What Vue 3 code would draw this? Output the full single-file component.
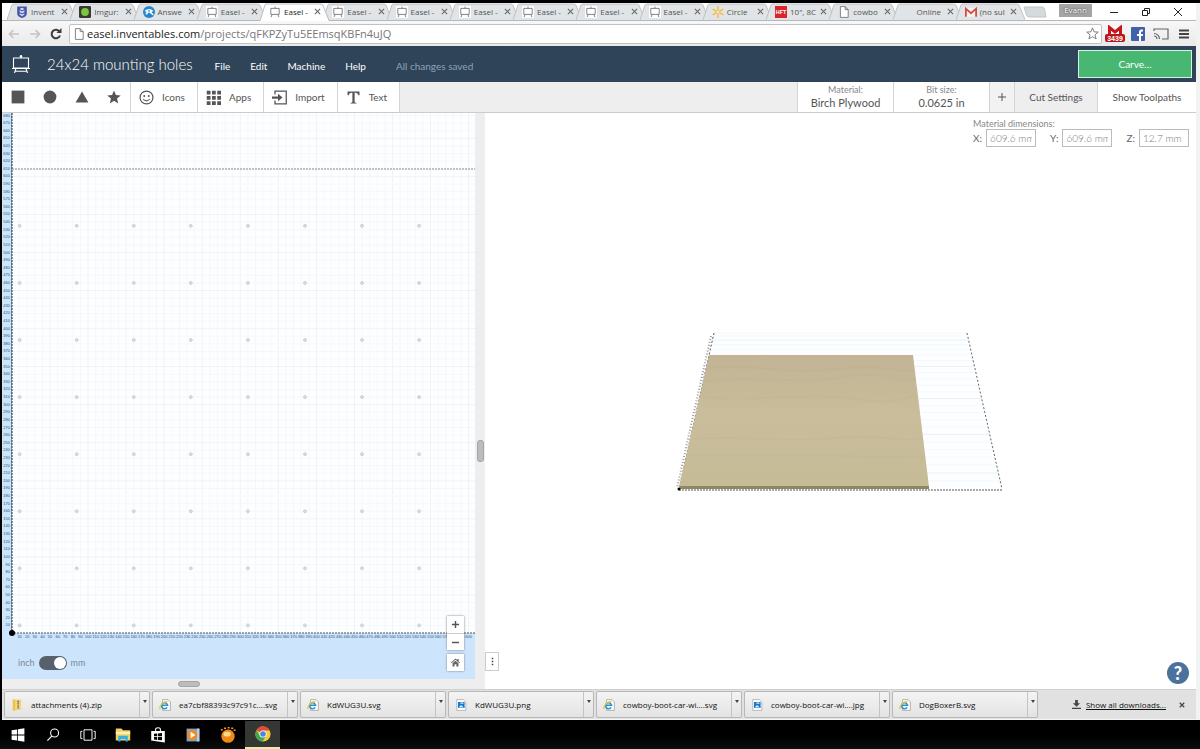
<script setup>
import { ref } from 'vue'

const easelTab = (active = false) => ({ icon: 'easel', title: 'Easel -', active })
const tabs = [
  { icon: 'shield', title: 'Invent' },
  { icon: 'imgur', title: 'Imgur:' },
  { icon: 'answers', title: 'Answe' },
  easelTab(),
  easelTab(true),
  easelTab(),
  easelTab(),
  easelTab(),
  easelTab(),
  easelTab(),
  easelTab(),
  { icon: 'spark', title: 'Circle' },
  { icon: 'hft', title: '10", 8C' },
  { icon: 'page', title: 'cowbo' },
  { icon: '', title: 'Online' },
  { icon: 'gmail', title: '(no sul' }
]

const downloads = [
  { icon: 'zip', name: 'attachments (4).zip' },
  { icon: 'ie', name: 'ea7cbf88393c97c91c....svg' },
  { icon: 'ie', name: 'KdWUG3U.svg' },
  { icon: 'photo', name: 'KdWUG3U.png' },
  { icon: 'ie', name: 'cowboy-boot-car-wi....svg' },
  { icon: 'photo', name: 'cowboy-boot-car-wi....jpg' },
  { icon: 'ie', name: 'DogBoxerB.svg' }
]

const menus = ['File', 'Edit', 'Machine', 'Help']
const shapes = [
  { id: 'square', label: 'Square' },
  { id: 'circle', label: 'Circle' },
  { id: 'triangle', label: 'Triangle' },
  { id: 'star', label: 'Star' }
]
const tools = [
  { id: 'smile', label: 'Icons' },
  { id: 'apps', label: 'Apps' },
  { id: 'import', label: 'Import' },
  { id: 'text', label: 'Text' }
]
const taskIcons = [
  { id: 'windows', label: 'Start' },
  { id: 'search', label: 'Search' },
  { id: 'taskview', label: 'Task view' },
  { id: 'folder', label: 'File Explorer' },
  { id: 'store', label: 'Store' },
  { id: 'media', label: 'Media player' },
  { id: 'orb', label: 'Image viewer' },
  { id: 'chrome', label: 'Chrome', active: true }
]

const dims = ref([
  { axis: 'X', value: '609.6 mm' },
  { axis: 'Y', value: '609.6 mm' },
  { axis: 'Z', value: '12.7 mm' }
])
const metric = ref(true)

// Drawing canvas geometry: 10 mm is STEP units, origin at (OX, OY)
const STEP = 7.61
const OX = 10
const OY = 520
const cols = Array.from({ length: 60 }, (_, i) => i + 1)
const rows = Array.from({ length: 68 }, (_, i) => i + 1)
const holes = []
for (let c = 0; c < 8; c++) {
  for (let r = 0; r < 8; r++) {
    holes.push({ x: OX + STEP * (1 + 7.5 * c), y: OY - STEP * (1 + 7.5 * r) })
  }
}

// Horizontal lines of the preview's ground grid, as depth from the far edge
const ground = Array.from({ length: 24 }, (_, i) => {
  const t = (i / 24) ** 1.25
  return { y: 220 + 156 * t, x1: 228 - 34 * t, x2: 482 + 35 * t, strong: i % 5 === 2 }
})
const grain = [
  'M222 255C270 250 300 262 350 256S410 260 428 257',
  'M220 268C260 262 310 272 360 264S400 270 430 266',
  'M216 284C270 290 320 278 372 286S420 280 432 284',
  'M208 326C250 322 300 330 350 325S410 330 436 326',
  'M204 342C260 344 310 340 360 343S420 342 439 344'
]
</script>

<template>
  <div class="desktop">
    <svg class="defs" aria-hidden="true">
      <symbol id="easel" viewBox="0 0 20 20">
        <path d="M10 1v3M2.500 4h15v10h-15zM1 14.500h18M5 14.500l-1.500 4.500M15 14.500l1.500 4.500M4 17.200h12" fill="none" stroke="currentColor" stroke-width="1.100" />
        <circle cx="10" cy="2.500" r="1.300" fill="currentColor" />
      </symbol>
      <symbol id="easelfav" viewBox="0 0 20 20">
        <rect width="20" height="20" fill="#fff" />
        <path d="M10 1v3M3 4h14v10H3zM5 14.500l-1.500 4M15 14.500l1.500 4" fill="none" stroke="#777" stroke-width="1.500" />
      </symbol>
      <symbol id="shield" viewBox="0 0 20 20">
        <path d="M2 1h16v11q0 6-8 8-8-2-8-8z" fill="#4656a8" />
        <path d="M10 3l4 2-4 2-4-2zM6 7l4 2v3l-4-2zM14 7l-4 2v3l4-2zM6 12l4 2 4-2v2l-4 3-4-3z" fill="#dfe4f8" />
      </symbol>
      <symbol id="imgur" viewBox="0 0 20 20">
        <rect width="20" height="20" rx="2" fill="#3a3834" /><circle cx="10" cy="10" r="6.500" fill="#7bc93a" />
      </symbol>
      <symbol id="answers" viewBox="0 0 20 20">
        <circle cx="10" cy="10" r="10" fill="#2585cf" />
        <path d="M2.500 8.500Q10 1.500 17.500 8.500L14 10l4 4-2 1.500-6-5-4 4-2-1.500L6 10z" fill="#fff" /><circle cx="10" cy="8" r="1.500" fill="#2585cf" />
      </symbol>
      <symbol id="spark" viewBox="0 0 20 20">
        <path d="M10 1v6M10 13v6M2 5.500l5 3M18 5.500l-5 3M2 14.500l5-3M18 14.500l-5-3" stroke="#f9bb35" stroke-width="2.500" stroke-linecap="round" />
      </symbol>
      <symbol id="hft" viewBox="0 0 20 20">
        <rect width="20" height="20" fill="#d9252b" />
        <text x="10" y="14" text-anchor="middle" font-family="Liberation Sans, sans-serif" font-weight="bold" font-size="9" fill="#fff">HFT</text>
      </symbol>
      <symbol id="page" viewBox="0 0 20 20">
        <path d="M4 1h8l5 5v13H4zM12 1v5h5" fill="#fff" stroke="#777" stroke-width="1.500" />
      </symbol>
      <symbol id="gmail" viewBox="0 0 20 20">
        <rect x="0" y="3" width="20" height="15" rx="1" fill="#f4f4f4" />
        <path d="M1.500 18V4.500L10 12l8.500-7.500V18" fill="none" stroke="#d54b3d" stroke-width="3" />
      </symbol>
      <symbol id="zip" viewBox="0 0 20 20">
        <path d="M3 1h14v17l-10 1H3z" fill="#f6d57a" /><path d="M3 1h4v18H3z" fill="#edc350" />
        <path d="M12 3v13" stroke="#77725f" stroke-width="3" stroke-dasharray="2 1" />
      </symbol>
      <symbol id="ie" viewBox="0 0 20 20">
        <path d="M6 1h9l4 4v14H6z" fill="#fafafa" stroke="#8a8a8a" />
        <path d="M13.500 14a5 5 0 1 1 .8-3.500H5" fill="none" stroke="#2a94d6" stroke-width="2.600" />
        <path d="M2 17C-1 13 7 4 14 4" fill="none" stroke="#e9c62e" stroke-width="1.800" />
      </symbol>
      <symbol id="photo" viewBox="0 0 20 20">
        <path d="M3 1h11l4 4v14H3z" fill="#fff" stroke="#8a9099" /><rect x="5" y="5" width="11" height="10" fill="#1877c9" />
        <path d="M6 14l4-4 5 4zM9 6h5v2H9z" fill="#d7ecfa" />
      </symbol>
      <symbol id="square" viewBox="0 0 20 20"><rect x="2" y="2" width="16" height="16" fill="currentColor" /></symbol>
      <symbol id="circle" viewBox="0 0 20 20"><circle cx="10" cy="10" r="8" fill="currentColor" /></symbol>
      <symbol id="triangle" viewBox="0 0 20 20"><path d="M10 3l8 14H2z" fill="currentColor" /></symbol>
      <symbol id="star" viewBox="0 0 20 20"><path d="M10 2l2.400 5.500 6 .5-4.600 4 1.400 6-5.200-3.200L4.800 18l1.400-6-4.600-4 6-.5z" fill="currentColor" /></symbol>
      <symbol id="smile" viewBox="0 0 20 20">
        <circle cx="10" cy="10" r="8.600" fill="none" stroke="currentColor" stroke-width="1.600" />
        <circle cx="7" cy="8" r="1.300" fill="currentColor" /><circle cx="13" cy="8" r="1.300" fill="currentColor" />
        <path d="M5.500 12q4.500 5 9 0" fill="none" stroke="currentColor" stroke-width="1.400" />
      </symbol>
      <symbol id="apps" viewBox="0 0 20 20">
        <path d="M1 1h5v5H1zM8 1h5v5H8zM15 1h5v5h-5zM1 8h5v5H1zM8 8h5v5H8zM15 8h5v5h-5zM1 15h5v5H1zM8 15h5v5H8zM15 15h5v5h-5z" fill="currentColor" />
      </symbol>
      <symbol id="import" viewBox="0 0 20 20">
        <path d="M4 6V1.500h15v17H4V14" fill="none" stroke="currentColor" stroke-width="1.700" />
        <path d="M0 8.500h8V5l6 5-6 5v-3.500H0z" fill="currentColor" />
      </symbol>
      <symbol id="text" viewBox="0 0 20 20">
        <path d="M2 2h16v5h-1.500Q16 3.500 13 3.500h-1.500V16q0 1 2.500 1.200V18H6v-.8Q8.500 17 8.500 16V3.500H7Q4 3.500 3.500 7H2z" fill="currentColor" />
      </symbol>
      <symbol id="windows" viewBox="0 0 20 20"><path d="M2 4l7-1v6.500H2zM10 2.800L18 1.500v8h-8zM2 10.500h7V17l-7-1zM10 10.500h8v8l-8-1.200z" fill="#fff" /></symbol>
      <symbol id="search" viewBox="0 0 20 20"><circle cx="12" cy="7.500" r="5" fill="none" stroke="#fff" stroke-width="1.300" /><path d="M8.500 11.500L3 17" stroke="#fff" stroke-width="1.500" /></symbol>
      <symbol id="taskview" viewBox="0 0 20 20"><path d="M5 3.500h10v13H5zM3 5.500H1v9h2M17 5.500h2v9h-2" fill="none" stroke="#fff" stroke-width="1.200" /></symbol>
      <symbol id="folder" viewBox="0 0 20 20"><path d="M1 2h7l2 2h9v13H1z" fill="#f4d067" /><path d="M1 6h18v3H1z" fill="#fff0ae" /><path d="M4 18v-7h12v7h-3v-3H7v3z" fill="#35aee0" /></symbol>
      <symbol id="store" viewBox="0 0 20 20"><path d="M7 5V3q0-2 3-2t3 2v2" fill="none" stroke="#fff" stroke-width="1.300" /><path d="M1.500 5h17v14.500L1.500 17z" fill="#fff" /><path d="M5 8.500l4-.3v3.500H5zM10 8l5-.4v4.100h-5zM5 12.600h4v3.500l-4-.4zM10 12.600h5v4l-5-.5z" fill="#050505" /></symbol>
      <symbol id="media" viewBox="0 0 20 20"><rect x="2" y="2" width="16" height="16" fill="#7aa7cf" /><rect x="15" y="2" width="3" height="16" fill="#b9d1e6" /><circle cx="9" cy="10" r="6.500" fill="#f28a24" /><path d="M7 6l6 4-6 4z" fill="#fff" /></symbol>
      <symbol id="orb" viewBox="0 0 20 20"><circle cx="10" cy="11.500" r="8.300" fill="#ee8a16" /><ellipse cx="9" cy="9" rx="4.500" ry="3" fill="#ffd98a" /><path d="M1 3.500h2.500M5 1.500h2.500M9.500 1h2.500M14 1.500h2.500M17 4h2.500" stroke="#e59a28" stroke-width="2" /></symbol>
      <symbol id="chrome" viewBox="0 0 20 20">
        <circle cx="10" cy="10" r="9.500" fill="#f7ca3b" />
        <path d="M10 10L1.800 5.200A9.500 9.500 0 0 1 18.400 5.500H10z" fill="#e14b3b" />
        <path d="M1.800 5.200A9.500 9.500 0 0 0 9.500 19.500L14 12 6 12z" fill="#3fa653" />
        <circle cx="10" cy="10" r="4.500" fill="#fff" /><circle cx="10" cy="10" r="3.500" fill="#4a86e0" />
      </symbol>
    </svg>

    <div class="window">
      <div class="tabstrip">
        <div class="tabs">
          <div v-for="(t, i) in tabs" :key="i" class="tab" :class="{ active: t.active }">
            <svg class="tab-shape" viewBox="0 0 70 17" preserveAspectRatio="none" aria-hidden="true">
              <path d="M0 17L5 2Q5.500 1 7 1H61Q63 1 63.500 2L70 17" />
            </svg>
            <svg class="fav" aria-hidden="true"><use v-if="t.icon" :href="t.icon === 'easel' ? '#easelfav' : '#' + t.icon" /></svg>
            <span class="tab-title">{{ t.title }}</span>
            <button class="tab-close" aria-label="Close tab">
              <svg viewBox="0 0 8 8"><path d="M1 1l6 6M7 1L1 7" /></svg>
            </button>
          </div>
        </div>
        <button class="newtab" aria-label="New tab"><svg viewBox="0 0 24 12"><path d="M1 1h18q2 0 2.500 2L23 11H6Q4 11 3.500 9z" fill="#d5dadd" stroke="#c0c5c8" /></svg></button>
        <span class="profile">Evann</span>
        <div class="winctl">
          <button aria-label="Minimize"><svg viewBox="0 0 8 8"><path d="M0 4.500h8" /></svg></button>
          <button aria-label="Restore"><svg viewBox="0 0 8 8"><path d="M.5 2.500h5v5h-5zM2.500 2V.5h5v5H6" /></svg></button>
          <button aria-label="Close"><svg viewBox="0 0 8 8"><path d="M0 0l8 8M8 0L0 8" /></svg></button>
        </div>
      </div>

      <div class="addressbar">
        <button class="nav" aria-label="Back"><svg viewBox="0 0 12 12"><path d="M11 6H1.500M5.500 2l-4 4 4 4" stroke="#c4c4c4" /></svg></button>
        <button class="nav" aria-label="Forward"><svg viewBox="0 0 12 12"><path d="M1 6h9.500M6.500 2l4 4-4 4" stroke="#c4c4c4" /></svg></button>
        <button class="nav" aria-label="Reload"><svg viewBox="0 0 12 12"><path d="M9.500 3.500A4.300 4.300 0 1 0 10 7.500" stroke="#3c3c3c" stroke-width="2" /><path d="M11.500 0v5h-5z" fill="#3c3c3c" /></svg></button>
        <div class="omnibox">
          <svg class="doc" aria-hidden="true"><use href="#page" /></svg>
          <span class="url"><b>easel.inventables.com</b>/projects/qFKPZyTu5EEmsqKBFn4uJQ</span>
          <button class="bookmark" aria-label="Bookmark"><svg viewBox="0 0 14 14"><path d="M7 1l1.700 4.200 4.500.3-3.500 2.900 1.200 4.400L7 10.400l-3.900 2.400 1.200-4.400L.8 5.500l4.500-.3z" fill="#fff" stroke="#777" /></svg></button>
        </div>
        <div class="exts">
          <button class="ext" aria-label="Gmail checker">
            <svg viewBox="0 0 20 18"><rect x="3" y="1" width="14" height="10" fill="#fff" /><path d="M4.500 11V2.500L10 7l5.500-4.500V11" fill="none" stroke="#c8161d" stroke-width="3" /><rect y="9" width="20" height="8" rx="2" fill="#b8141b" /><text x="10" y="16" text-anchor="middle" font-family="Liberation Sans, sans-serif" font-weight="bold" font-size="7" fill="#fff">3439</text></svg>
          </button>
          <button class="ext" aria-label="Facebook">
            <svg viewBox="0 0 20 18"><rect x="3" y="2" width="14" height="14" rx="1" fill="#3f62ab" /><path d="M11 16v-5H9V9h2V7q0-2.500 2.500-2.500H15v2h-1Q13 6.500 13 7.500V9h2l-.3 2H13v5z" fill="#fff" /></svg>
          </button>
          <button class="ext" aria-label="Cast">
            <svg viewBox="0 0 20 18"><path d="M3 6V4h14v10h-6M3 8.500A5.500 5.500 0 0 1 8.500 14M3 11a3 3 0 0 1 3 3" fill="none" stroke="#666" stroke-width="1.200" /></svg>
          </button>
          <button class="ext" aria-label="Menu">
            <svg viewBox="0 0 20 18"><path d="M5 5.500h10M5 9h10M5 12.500h10" stroke="#444" stroke-width="2" /></svg>
          </button>
        </div>
      </div>

      <header class="appbar">
        <svg class="brand" aria-hidden="true"><use href="#easel" /></svg>
        <h1>24x24 mounting holes</h1>
        <nav><button v-for="m in menus" :key="m">{{ m }}</button></nav>
        <span class="saved">All changes saved</span>
        <button class="carve">Carve…</button>
      </header>

      <div class="toolbar">
        <div class="shapes">
          <button v-for="s in shapes" :key="s.id" :aria-label="s.label"><svg><use :href="'#' + s.id" /></svg></button>
        </div>
        <button v-for="t in tools" :key="t.id" class="tool"><svg aria-hidden="true"><use :href="'#' + t.id" /></svg>{{ t.label }}</button>
        <div class="filler"></div>
        <button class="spec"><small>Material:</small>Birch Plywood</button>
        <button class="spec"><small>Bit size:</small>0.0625 in</button>
        <button class="plus" aria-label="Add bit"><svg viewBox="0 0 10 10"><path d="M5 1v8M1 5h8" /></svg></button>
        <button class="cut">Cut Settings</button>
        <button class="paths">Show Toolpaths</button>
      </div>

      <main class="workspace">
        <section class="design">
          <div class="canvas">
            <svg class="drawing" viewBox="0 0 473 566" preserveAspectRatio="xMinYMax slice">
              <rect width="473" height="566" fill="#cce5fd" />
              <rect :x="OX" y="0" width="463" :height="OY" fill="#fdfeff" />
              <g stroke-width="1">
                <line v-for="c in cols" :key="'c' + c" :x1="OX + c * STEP" :x2="OX + c * STEP" y1="0" :y2="OY" :stroke="c % 5 ? '#f5f8fa' : '#eff3f5'" />
                <line v-for="r in rows" :key="'r' + r" :x1="OX" x2="473" :y1="OY - r * STEP" :y2="OY - r * STEP" :stroke="r % 5 ? '#f5f8fa' : '#eff3f5'" />
              </g>
              <circle v-for="(h, i) in holes" :key="'h' + i" :cx="h.x" :cy="h.y" r="1.500" fill="#dcdcdc" stroke="#c8cacc" stroke-width="0.800" />
              <path d="M10 56H473" stroke="#888" stroke-width="1" stroke-dasharray="2 1" />
              <path d="M9.500 0V520" stroke="#6fa0b8" stroke-width="1" />
              <path d="M10 0V520H473" fill="none" stroke="#48525c" stroke-width="1.200" stroke-dasharray="2 1" />
              <g class="ticks">
                <text v-for="c in cols" :key="'tc' + c" :x="OX + c * STEP" y="525" text-anchor="middle">{{ c * 10 }}</text>
                <text v-for="r in rows" :key="'tr' + r" x="8" :y="OY - r * STEP + 1" text-anchor="end">{{ r * 10 }}</text>
              </g>
              <circle :cx="OX" :cy="OY" r="3" fill="#000" />
            </svg>
            <label class="units">
              inch
              <input v-model="metric" type="checkbox" role="switch" />
              mm
            </label>
            <div class="zoom">
              <div class="pair">
                <button aria-label="Zoom in"><svg viewBox="0 0 10 10"><path d="M5 1v8M1 5h8" /></svg></button>
                <button aria-label="Zoom out"><svg viewBox="0 0 10 10"><path d="M1 5h8" /></svg></button>
              </div>
              <button class="home" aria-label="Reset view"><svg viewBox="0 0 10 10"><path d="M0 5l5-4.500L7 2.300V1h1.500v2.600L10 5l-.6.700L5 2 .6 5.700zM1.700 5.800L5 3l3.300 2.800V9.500H6V7H4v2.500H1.700z" class="solid" /></svg></button>
            </div>
          </div>
          <div class="vbar"><i></i></div>
          <div class="hbar"><i></i></div>
        </section>

        <section class="preview">
          <svg class="scene" viewBox="0 0 711 576" preserveAspectRatio="xMidYMid meet">
            <defs>
              <linearGradient id="wood" x1="0" y1="0" x2="0" y2="1">
                <stop offset="0" stop-color="#c2b494" /><stop offset="0.450" stop-color="#c9bd9c" /><stop offset="1" stop-color="#c6bb97" />
              </linearGradient>
            </defs>
            <path d="M229 220H482L517 376H194z" fill="#fcfeff" />
            <line v-for="(g, i) in ground" :key="i" :x1="g.x1" :x2="g.x2" :y1="g.y" :y2="g.y" :stroke="g.strong ? '#e8f1f8' : '#f5f9fc'" stroke-width="1" />
            <path d="M229 220L194 376" fill="none" stroke="#555" stroke-width="1" stroke-dasharray="2 2" />
            <path d="M226 223L192 375" fill="none" stroke="#999" stroke-width="2" stroke-dasharray="1 2" />
            <path d="M482 220L517 376" fill="none" stroke="#666" stroke-width="1" stroke-dasharray="2 2" />
            <path d="M194 377H517" fill="none" stroke="#555" stroke-width="1" stroke-dasharray="2 1" />
            <path d="M224 242H428L444 374H194z" fill="url(#wood)" />
            <path v-for="(d, i) in grain" :key="'g' + i" :d="d" fill="none" stroke="#b6a680" stroke-opacity="0.120" stroke-width="2" />
            <path d="M195 373H444V376H194z" fill="#8f8664" />
            <circle cx="194" cy="376" r="1.500" fill="#000" />
          </svg>
          <form class="dims" @submit.prevent>
            <p>Material dimensions:</p>
            <div class="fields">
              <label v-for="d in dims" :key="d.axis">{{ d.axis }}:<input v-model="d.value" type="text" /></label>
            </div>
          </form>
          <button class="more" aria-label="Panel options"><svg viewBox="0 0 4 12"><path d="M1 1h2v2H1zM1 5h2v2H1zM1 9h2v2H1z" fill="#444" /></svg></button>
          <button class="help" aria-label="Help"><span>?</span></button>
        </section>
      </main>

      <footer class="shelf">
        <div v-for="(d, i) in downloads" :key="i" class="dl">
          <button class="dl-main"><svg aria-hidden="true"><use :href="'#' + d.icon" /></svg>{{ d.name }}</button>
          <button class="dl-more" aria-label="Download options"><svg viewBox="0 0 6 4"><path d="M1 0h4L3 3z" fill="#444" /></svg></button>
        </div>
        <div class="all">
          <svg viewBox="0 0 10 10" aria-hidden="true"><path d="M3.500 0h3v3.500H9L5 7.500 1 3.500h2.500zM0 8.500h10V10H0z" fill="#444" /></svg>
          <a href="#">Show all downloads...</a>
          <button aria-label="Close downloads bar"><svg viewBox="0 0 8 8"><path d="M1 1l6 6M7 1L1 7" stroke="#444" stroke-width="1.600" /></svg></button>
        </div>
      </footer>
    </div>

    <div class="taskbar">
      <button v-for="t in taskIcons" :key="t.id" :class="{ on: t.active }" :aria-label="t.label"><svg><use :href="'#' + t.id" /></svg></button>
    </div>
  </div>
</template>

<style>
html,
body {
  margin: 0;
  background: #000;
}
</style>

<style scoped>
* {
  box-sizing: border-box;
}
button {
  margin: 0;
  padding: 0;
  border: 0;
  background: none;
  font: inherit;
  color: inherit;
}
svg {
  display: block;
  flex: none;
}
.defs {
  position: absolute;
  width: 0;
  height: 0;
}
.desktop {
  display: flex;
  flex-direction: column;
  height: 100vh;
  overflow: hidden;
  background: #000;
  font-family: Lato, "Liberation Sans", sans-serif;
}
.window {
  flex: 1;
  min-height: 0;
  display: flex;
  flex-direction: column;
  margin: 3px 0 0 2px;
  border-right: 4px solid #f1f2f2;
  background: #fff;
}

/* Browser chrome */
.tabstrip {
  display: flex;
  align-items: center;
  height: 18px;
  padding-left: 5px;
  border-bottom: 1px solid #b5b8ba;
  font: 8px/12px "Open Sans", sans-serif;
  color: #555;
}
.tabs {
  display: flex;
  flex: 0 1 1012px;
  min-width: 0;
  height: 17px;
}
.tab {
  position: relative;
  flex: 1 1 0;
  min-width: 0;
  display: flex;
  align-items: center;
  gap: 3px;
  padding-left: 9px;
}
.tab-shape {
  position: absolute;
  left: 0;
  top: 0;
  width: calc(100% + 6px);
  height: 17px;
  fill: #e0e4e6;
  stroke: #bcc1c4;
}
.tab.active {
  z-index: 1;
  color: #222;
}
.tab.active .tab-shape {
  height: 18px;
  fill: #fff;
}
.fav {
  position: relative;
  width: 12px;
  height: 12px;
}
.tab-title {
  position: relative;
  flex: 1;
  min-width: 0;
  white-space: nowrap;
}
.tab-close {
  position: relative;
  width: 9px;
}
.tab-close svg {
  width: 7px;
  height: 7px;
  stroke: #666;
  stroke-width: 1.2;
}
.newtab {
  width: 24px;
  margin-left: 4px;
}
.newtab svg {
  width: 24px;
  height: 12px;
}
.profile {
  width: 33px;
  height: 13px;
  margin: 0 18px 3px auto;
  background: #a5a5a5;
  color: #fff;
  text-align: center;
  text-shadow: 0 0 2px #222;
}
.winctl {
  display: flex;
  gap: 24px;
  margin-right: 14px;
}
.winctl svg {
  width: 8px;
  height: 8px;
  fill: none;
  stroke: #222;
}
.addressbar {
  display: flex;
  align-items: center;
  height: 25px;
  background: linear-gradient(#f7f7f7, #eaeaea);
}
.nav {
  width: 21px;
  padding-left: 6px;
}
.nav svg {
  width: 12px;
  height: 12px;
  fill: none;
  stroke-width: 1.6;
}
.omnibox {
  flex: 1;
  min-width: 0;
  display: flex;
  align-items: center;
  height: 20px;
  margin-left: 4px;
  padding: 0 2px 0 3px;
  border: 1px solid #c2c2c2;
  border-radius: 2px;
  background: #fff;
  font: 11px/16px "Open Sans", sans-serif;
  color: #777;
}
.omnibox b {
  font-weight: 400;
  color: #222;
}
.doc {
  width: 12px;
  height: 12px;
  margin-right: 2px;
}
.url {
  flex: 1;
  white-space: nowrap;
}
.bookmark svg {
  width: 13px;
  height: 13px;
}
.exts {
  display: flex;
  gap: 3px;
  padding: 0 2px 0 3px;
}
.ext svg {
  width: 20px;
  height: 18px;
}

/* Application header */
.appbar {
  display: flex;
  align-items: center;
  height: 36px;
  padding: 0 4px 0 9px;
  background: #2f4458;
  color: #fff;
}
.brand {
  width: 20px;
  height: 20px;
  margin-right: 16px;
}
h1 {
  margin: 0 22px 0 0;
  font-size: 15px;
  line-height: 24px;
  font-weight: 300;
}
nav {
  display: flex;
  gap: 20px;
  margin-top: 4px;
}
nav button,
.saved {
  font-size: 10px;
  line-height: 16px;
}
.saved {
  margin: 4px 0 0 30px;
  color: #8ba3bb;
}
.carve {
  width: 114px;
  height: 28px;
  margin-left: auto;
  border: 1px solid #d9f0e3;
  background: #48b772;
  font-size: 10px;
}
.toolbar {
  display: flex;
  height: 31px;
  border-bottom: 1px solid #ccc;
  font-size: 10px;
  color: #555;
}
.toolbar > * {
  border-right: 1px solid #d4d4d4;
}
.toolbar > :last-child {
  border-right: 0;
}
.shapes {
  display: flex;
  width: 129px;
}
.shapes button {
  width: 32px;
  display: grid;
  place-items: center;
}
.shapes svg {
  width: 16px;
  height: 16px;
}
.tool {
  display: flex;
  align-items: center;
  gap: 8px;
  padding: 0 12px 0 8px;
}
.tool svg {
  width: 15px;
  height: 15px;
}
.filler {
  flex: 1;
  background: #eee;
}
.spec {
  width: 96px;
  font-size: 11px;
  line-height: 14px;
}
.spec small {
  display: block;
  font-size: 9px;
  line-height: 12px;
  color: #888;
}
.plus {
  width: 25px;
  display: grid;
  place-items: center;
  background: #f2f2f2;
}
.plus svg {
  width: 10px;
  height: 10px;
  stroke: #555;
}
.cut {
  width: 83px;
  background: #eee;
}
.paths {
  width: 98px;
}

/* Workspace */
.workspace {
  flex: 1;
  min-height: 0;
  display: grid;
  grid-template-columns: minmax(0, 483fr) minmax(0, 711fr);
}
.design {
  display: grid;
  grid-template: minmax(0, 1fr) 10px / minmax(0, 1fr) 10px;
  min-height: 0;
  background: #eee;
}
.canvas {
  position: relative;
  min-height: 0;
}
.drawing {
  width: 100%;
  height: 100%;
}
.ticks {
  font: 4px "Liberation Sans", sans-serif;
  fill: #33506e;
}
.vbar,
.hbar {
  display: grid;
  place-items: center;
}
.vbar {
  padding-top: 110px;
}
.hbar {
  padding-right: 100px;
}
.vbar i,
.hbar i {
  border: 1px solid #a5a5a5;
  border-radius: 3px;
  background: #bcbcbc;
}
.vbar i {
  width: 7px;
  height: 22px;
}
.hbar i {
  width: 22px;
  height: 6px;
}
.units {
  position: absolute;
  left: 16px;
  bottom: 8px;
  display: flex;
  align-items: center;
  gap: 4px;
  font-size: 9px;
  line-height: 16px;
  color: #7a8794;
}
.units input {
  appearance: none;
  display: flex;
  align-items: center;
  width: 28px;
  height: 14px;
  margin: 0;
  padding: 0 1px;
  border-radius: 7px;
  background: #57616c;
}
.units input::before {
  content: "";
  width: 12px;
  height: 12px;
  border-radius: 50%;
  background: #fff;
}
.units input:checked::before {
  margin-left: auto;
}
.zoom {
  position: absolute;
  right: 11px;
  bottom: 8px;
  display: grid;
  gap: 4px;
}
.zoom button {
  display: grid;
  place-items: center;
  width: 17px;
  height: 17px;
  background: #fff;
}
.pair,
.zoom .home {
  box-shadow: 0 0 2px #777;
}
.pair button + button {
  border-top: 1px solid #ccc;
}
.zoom svg {
  width: 9px;
  height: 9px;
  stroke: #555;
  stroke-width: 1.6;
}
.zoom .solid {
  fill: #666;
  stroke: none;
}
.preview {
  position: relative;
  min-height: 0;
  background: #fff;
}
.scene {
  width: 100%;
  height: 100%;
}
.dims {
  position: absolute;
  top: 6px;
  right: 7px;
  color: #666;
}
.dims p {
  margin: 0;
  font-size: 9px;
  line-height: 10px;
  color: #888;
}
.fields {
  display: flex;
  gap: 14px;
  font-size: 10px;
}
.fields label {
  display: flex;
  align-items: center;
  gap: 4px;
}
.fields input {
  width: 50px;
  height: 18px;
  padding: 0 3px;
  border: 1px solid #bbb;
  background: #fff;
  font: 300 10px Lato, sans-serif;
  color: #777;
}
.more {
  position: absolute;
  left: 0;
  bottom: 18px;
  width: 14px;
  height: 19px;
  display: grid;
  place-items: center;
  border: 1px solid #ccc;
  background: #fff;
}
.more svg {
  width: 3px;
  height: 9px;
}
.help {
  position: absolute;
  right: 7px;
  bottom: 5px;
  width: 22px;
  height: 22px;
  border-radius: 50%;
  background: #4a729c;
  color: #fff;
  font-size: 18px;
  line-height: 22px;
  font-weight: 900;
}

/* Download shelf */
.shelf {
  display: flex;
  align-items: center;
  gap: 2px;
  height: 31px;
  padding: 0 0 0 2px;
  background: #e1e1e1;
  border-top: 1px solid #d0d0d0;
  border-bottom: 1px solid #f5f5f5;
  font: 8px/14px "Open Sans", sans-serif;
  color: #111;
}
.dl {
  display: flex;
  flex: 0 1 146px;
  min-width: 0;
  height: 27px;
  border: 1px solid #b8b8b8;
  border-radius: 2px;
  background: linear-gradient(#f4f4f4, #e3e3e3);
}
.dl-main {
  flex: 1;
  min-width: 0;
  display: flex;
  align-items: center;
  gap: 8px;
  padding-left: 6px;
  overflow: hidden;
  white-space: nowrap;
}
.dl-main svg {
  width: 12px;
  height: 12px;
}
.dl-more {
  width: 10px;
  padding: 0 2px 6px;
  border-left: 1px solid #c4c4c4;
}
.dl-more svg {
  width: 6px;
  height: 4px;
}
.all {
  display: flex;
  align-items: center;
  gap: 5px;
  margin-left: auto;
  padding-right: 11px;
  white-space: nowrap;
}
.all svg {
  width: 9px;
  height: 9px;
}
.all a {
  color: #111;
}
.all button {
  margin-left: 8px;
}
.all button svg {
  width: 6px;
  height: 6px;
}
.taskbar {
  display: flex;
  align-items: stretch;
  height: 29px;
  padding-top: 1px;
  background: linear-gradient(#000 55%, #0c0f0d);
}
.taskbar button {
  width: 35px;
  display: grid;
  place-items: center;
}
.taskbar svg {
  width: 16px;
  height: 16px;
}
.taskbar .on {
  background: #353735;
  border-bottom: 2px solid #efe9a5;
}
</style>
